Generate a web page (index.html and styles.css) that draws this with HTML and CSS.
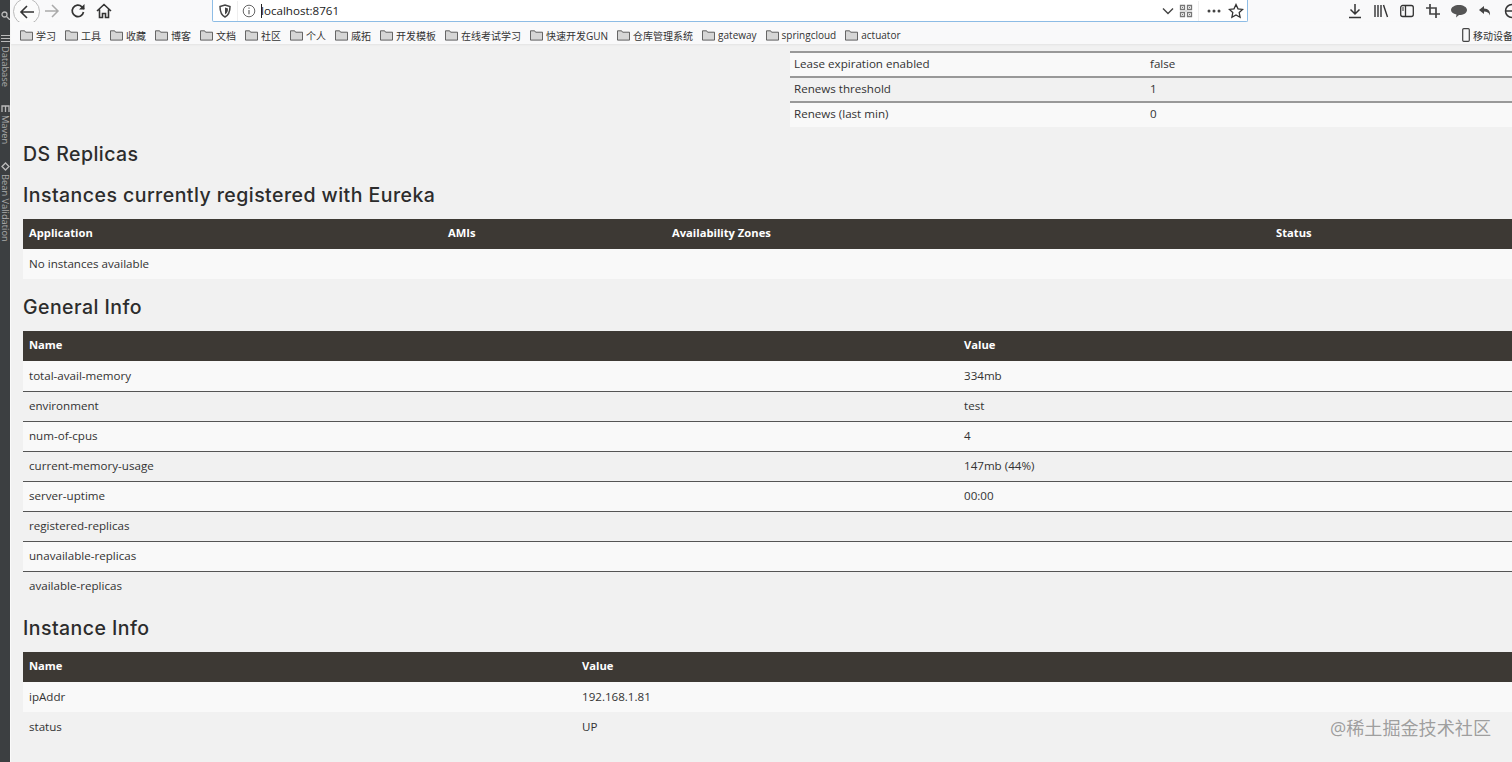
FILE: index.html
```html
<!DOCTYPE html>
<html lang="en">
<head>
    <meta charset="UTF-8">
    <title>Eureka</title>
    <link rel="stylesheet" href="styles.css">
</head>
<body>
    <div class="ide-strip">
        <svg class="strip-icon strip-search" width="9" height="9" viewBox="0 0 9 9"><circle cx="3.500" cy="3.500" r="2.500" fill="none" stroke="#bbb" stroke-width="1.300"/><path d="M5.500 5.500L9 9" stroke="#bbb" stroke-width="1.300"/></svg>
        <svg class="strip-icon strip-list" width="9" height="9" viewBox="0 0 9 9"><path d="M0 1.500h9M0 4.500h9M0 7.500h9" stroke="#bbb" stroke-width="1.200"/></svg>
        <span class="strip-label">Database</span>
        <svg class="strip-icon strip-m" width="9" height="7" viewBox="0 0 9 7"><path d="M1 7V1h7v6M4.500 1v6" fill="none" stroke="#bbb" stroke-width="1.300"/></svg>
        <span class="strip-label">Maven</span>
        <svg class="strip-icon strip-b" width="9" height="9" viewBox="0 0 9 9"><path d="M1 4.500L4.500 1 8 4.500 4.500 8z" fill="none" stroke="#bbb" stroke-width="1.300"/></svg>
        <span class="strip-label">Bean Validation</span>
    </div>

    <div class="window">
        <div class="toolbar">
            <div class="nav-buttons">
                <button class="back-button">
                    <svg width="18" height="18" viewBox="0 0 18 18"><path d="M16 9H3M9 3L3 9l6 6" fill="none" stroke="#333" stroke-width="1.600"/></svg>
                </button>
                <svg class="icon" width="18" height="18" viewBox="0 0 18 18"><path d="M2 9h13M9 3l6 6-6 6" fill="none" stroke="#aaa" stroke-width="1.500"/></svg>
                <svg class="icon" width="18" height="18" viewBox="0 0 18 18"><path d="M14.500 10a5.700 5.700 0 1 1-1.600-5.200L15 7" fill="none" stroke="#333" stroke-width="1.700"/><path d="M15.500 2v5.500H10z" fill="#333"/></svg>
                <svg class="icon" width="18" height="18" viewBox="0 0 18 18"><path d="M2 9l7-6.500L16 9M4.500 7.500V15.500h3v-4h3v4h3V7.500" fill="none" stroke="#333" stroke-width="1.600"/></svg>
            </div>
            <div class="urlbar">
                <svg class="url-icon" width="14" height="14" viewBox="0 0 14 14"><path d="M2 2.500L7 1l5 1.500c0 5-1 8.500-5 10.500C3 11 2 7.500 2 2.500z" fill="none" stroke="#444" stroke-width="1.500"/><path d="M7 3.500l3 1c0 3-.6 4.500-3 6z" fill="#444"/></svg>
                <span class="url-sep"></span>
                <svg class="url-icon" width="14" height="14" viewBox="0 0 14 14"><circle cx="7" cy="7" r="5.800" fill="none" stroke="#666"/><path d="M7 6v4.300M7 3.500v1.300" stroke="#666" stroke-width="1.200"/></svg>
                <span class="url-text"><span class="caret"></span>localhost:8761</span>
                <svg class="url-icon" width="14" height="14" viewBox="0 0 14 14"><path d="M2 4.500l5 5 5-5" fill="none" stroke="#444" stroke-width="1.400"/></svg>
                <svg class="url-icon" width="14" height="14" viewBox="0 0 14 14"><path d="M1.500 1.500h4v4h-4zM8.500 1.500h4v4h-4zM1.500 8.500h4v4h-4zM8.500 8.500h4v4h-4z" fill="none" stroke="#777" stroke-width="1.300"/><path d="M3 3h1v1H3zM10 3h1v1h-1zM3 10h1v1H3zM10 10h1v1h-1zM6.500 6.500h1v1h-1z" fill="#777"/></svg>
                <span class="url-sep"></span>
                <svg class="dots" width="16" height="14" viewBox="0 0 16 14"><circle cx="3" cy="7" r="1.500" fill="#444"/><circle cx="8" cy="7" r="1.500" fill="#444"/><circle cx="13" cy="7" r="1.500" fill="#444"/></svg>
                <svg class="url-icon" width="16" height="16" viewBox="0 0 16 16"><path d="M8 1.500l2 4.300 4.600.6-3.400 3.200.9 4.700L8 12l-4.100 2.300.9-4.700L1.400 6.400 6 5.800z" fill="none" stroke="#333" stroke-width="1.300"/></svg>
            </div>
            <div class="tools">
                <svg width="16" height="16" viewBox="0 0 16 16"><path d="M8 1v10M3.500 6.500L8 11l4.500-4.500M2 14.500h12" fill="none" stroke="#333" stroke-width="1.500"/></svg>
                <svg width="16" height="16" viewBox="0 0 16 16"><path d="M2 2v12M5 2v12M8 2v12M10.500 2l4 12" fill="none" stroke="#333" stroke-width="1.400"/></svg>
                <svg width="16" height="16" viewBox="0 0 16 16"><rect x="1.700" y="2.500" width="12.600" height="11" rx="2" fill="none" stroke="#333" stroke-width="1.300"/><path d="M6.500 2.500v11" stroke="#333" stroke-width="1.300"/><path d="M3 5h2M3 7h2" stroke="#333"/></svg>
                <svg width="16" height="16" viewBox="0 0 16 16"><path d="M5 1v10h10M1 5h10v10" fill="none" stroke="#444" stroke-width="1.700"/></svg>
                <svg width="16" height="16" viewBox="0 0 16 16"><path d="M8 2c4 0 8 2 8 5s-3.500 5-8 5l-3 2.500.5-3C2 10.500 0 9 0 7c0-3 4-5 8-5z" fill="#555"/></svg>
                <svg width="16" height="16" viewBox="0 0 16 16"><path d="M7 3L2 7l5 4V8.500c3 0 5 1 6 4 .5-4-1.500-7-6-7z" fill="#444"/></svg>
                <svg width="16" height="16" viewBox="0 0 16 16"><circle cx="9" cy="8" r="6.500" fill="none" stroke="#333" stroke-width="1.500"/><path d="M3 8h12" stroke="#333" stroke-width="1.500"/></svg>
            </div>
        </div>

        <div class="bookmarks">
            <a class="bookmark"><svg class="folder" viewBox="0 0 14 12"><path d="M.5 1.500h4.500l1 1.500h7.500v8.500H.5z" fill="#d6d6d6" stroke="#555"/></svg>学习</a>
            <a class="bookmark"><svg class="folder" viewBox="0 0 14 12"><path d="M.5 1.500h4.500l1 1.500h7.500v8.500H.5z" fill="#d6d6d6" stroke="#555"/></svg>工具</a>
            <a class="bookmark"><svg class="folder" viewBox="0 0 14 12"><path d="M.5 1.500h4.500l1 1.500h7.500v8.500H.5z" fill="#d6d6d6" stroke="#555"/></svg>收藏</a>
            <a class="bookmark"><svg class="folder" viewBox="0 0 14 12"><path d="M.5 1.500h4.500l1 1.500h7.500v8.500H.5z" fill="#d6d6d6" stroke="#555"/></svg>博客</a>
            <a class="bookmark"><svg class="folder" viewBox="0 0 14 12"><path d="M.5 1.500h4.500l1 1.500h7.500v8.500H.5z" fill="#d6d6d6" stroke="#555"/></svg>文档</a>
            <a class="bookmark"><svg class="folder" viewBox="0 0 14 12"><path d="M.5 1.500h4.500l1 1.500h7.500v8.500H.5z" fill="#d6d6d6" stroke="#555"/></svg>社区</a>
            <a class="bookmark"><svg class="folder" viewBox="0 0 14 12"><path d="M.5 1.500h4.500l1 1.500h7.500v8.500H.5z" fill="#d6d6d6" stroke="#555"/></svg>个人</a>
            <a class="bookmark"><svg class="folder" viewBox="0 0 14 12"><path d="M.5 1.500h4.500l1 1.500h7.500v8.500H.5z" fill="#d6d6d6" stroke="#555"/></svg>威拓</a>
            <a class="bookmark"><svg class="folder" viewBox="0 0 14 12"><path d="M.5 1.500h4.500l1 1.500h7.500v8.500H.5z" fill="#d6d6d6" stroke="#555"/></svg>开发模板</a>
            <a class="bookmark"><svg class="folder" viewBox="0 0 14 12"><path d="M.5 1.500h4.500l1 1.500h7.500v8.500H.5z" fill="#d6d6d6" stroke="#555"/></svg>在线考试学习</a>
            <a class="bookmark"><svg class="folder" viewBox="0 0 14 12"><path d="M.5 1.500h4.500l1 1.500h7.500v8.500H.5z" fill="#d6d6d6" stroke="#555"/></svg>快速开发GUN</a>
            <a class="bookmark"><svg class="folder" viewBox="0 0 14 12"><path d="M.5 1.500h4.500l1 1.500h7.500v8.500H.5z" fill="#d6d6d6" stroke="#555"/></svg>仓库管理系统</a>
            <a class="bookmark"><svg class="folder" viewBox="0 0 14 12"><path d="M.5 1.500h4.500l1 1.500h7.500v8.500H.5z" fill="#d6d6d6" stroke="#555"/></svg>gateway</a>
            <a class="bookmark"><svg class="folder" viewBox="0 0 14 12"><path d="M.5 1.500h4.500l1 1.500h7.500v8.500H.5z" fill="#d6d6d6" stroke="#555"/></svg>springcloud</a>
            <a class="bookmark"><svg class="folder" viewBox="0 0 14 12"><path d="M.5 1.500h4.500l1 1.500h7.500v8.500H.5z" fill="#d6d6d6" stroke="#555"/></svg>actuator</a>
            <a class="bookmark mobile"><svg class="phone" viewBox="0 0 8 14"><rect x=".7" y=".7" width="6.600" height="12.600" rx="1" fill="none" stroke="#444" stroke-width="1.200"/></svg>移动设备上</a>
        </div>

        <div class="main-content">
            <div class="top-section">
                <table class="lease-table">
                    <tr><td class="lease-name">Lease expiration enabled</td><td>false</td></tr>
                    <tr><td>Renews threshold</td><td>1</td></tr>
                    <tr><td>Renews (last min)</td><td>0</td></tr>
                </table>
            </div>

            <h2 class="replicas-title">DS Replicas</h2>

            <h2>Instances currently registered with Eureka</h2>
            <table class="data-table">
                <tr>
                    <th class="col-app">Application</th>
                    <th class="col-ami">AMIs</th>
                    <th class="col-zone">Availability Zones</th>
                    <th>Status</th>
                </tr>
                <tr><td colspan="4">No instances available</td></tr>
            </table>

            <h2>General Info</h2>
            <table class="data-table general-table">
                <tr><th class="col-general">Name</th><th>Value</th></tr>
                <tr><td>total-avail-memory</td><td>334mb</td></tr>
                <tr><td>environment</td><td>test</td></tr>
                <tr><td>num-of-cpus</td><td>4</td></tr>
                <tr><td>current-memory-usage</td><td>147mb (44%)</td></tr>
                <tr><td>server-uptime</td><td>00:00</td></tr>
                <tr><td>registered-replicas</td><td></td></tr>
                <tr><td>unavailable-replicas</td><td></td></tr>
                <tr><td>available-replicas</td><td></td></tr>
            </table>

            <h2 class="instance-title">Instance Info</h2>
            <table class="data-table">
                <tr><th class="col-instance">Name</th><th>Value</th></tr>
                <tr><td>ipAddr</td><td>192.168.1.81</td></tr>
                <tr><td>status</td><td>UP</td></tr>
            </table>
        </div>
    </div>

    <div class="watermark">@稀土掘金技术社区</div>
</body>
</html>
```

FILE: styles.css
```css
html, body {
    margin: 0;
    height: 100%;
    overflow: hidden;
}

body {
    display: flex;
    font-family: "Open Sans", "Noto Sans CJK SC", sans-serif;
    font-size: 11.6px;
    color: #333;
    background-color: #f1f1f1;
}

.ide-strip {
    flex: 0 0 10px;
    border-right: 1px solid #fafafa;
    background-color: #3c3f41;
    overflow: hidden;
    display: flex;
    flex-direction: column;
    align-items: center;
}

.strip-icon {
    flex-shrink: 0;
}

.strip-search {
    margin-top: 11px;
}

.strip-list {
    margin-top: 14px;
}

.strip-m {
    margin-top: 18px;
}

.strip-b {
    margin-top: 18px;
}

.strip-label {
    writing-mode: vertical-rl;
    margin-top: 3px;
    font-size: 9.300px;
    line-height: 10px;
    color: #aaa;
    white-space: nowrap;
}

.window {
    flex: 1;
    min-width: 0;
    display: flex;
    flex-direction: column;
}

.toolbar {
    height: 22px;
    display: flex;
    align-items: center;
    background-color: #f9f9fa;
}

.nav-buttons {
    width: 201px;
    display: flex;
    align-items: center;
}

.nav-buttons button {
    width: 27px;
    height: 27px;
    margin: 0 3px 0 2px;
    padding: 4px;
    border: 1px solid #bbb;
    border-radius: 50%;
    background: #fbfbfb;
    flex-shrink: 0;
}

.icon {
    margin-right: 8px;
    flex-shrink: 0;
}

.urlbar {
    width: 1036px;
    height: 22px;
    box-sizing: border-box;
    display: flex;
    align-items: center;
    gap: 4px;
    padding: 0 3px 0 5px;
    background: #fff;
    border: 1px solid #8ebde6;
    border-top: none;
    border-radius: 0 0 2px 2px;
}

.url-icon {
    flex-shrink: 0;
}

.url-sep {
    width: 1px;
    height: 20px;
    margin-left: 1px;
    background: #eee;
}

.url-text {
    flex: 1;
    margin-left: 1px;
    font-size: 11.600px;
    color: #222;
    display: flex;
    align-items: center;
}

.caret {
    width: 1px;
    height: 14px;
    background: #222;
    margin-right: -1px;
}

.dots {
    margin: 0 2px 0 3px;
    flex-shrink: 0;
}

.tools {
    flex: 1;
    display: flex;
    align-items: center;
    gap: 10px;
    padding-left: 99px;
    overflow: hidden;
}

.tools svg {
    flex-shrink: 0;
}

.bookmarks {
    height: 22px;
    box-sizing: border-box;
    padding: 4px 0 0 9px;
    display: flex;
    align-items: center;
    gap: 9px;
    font-size: 10px;
    color: #333;
    background-color: #f9f9fa;
    box-shadow: 0 1px 2px rgba(0, 0, 0, 0.06);
    white-space: nowrap;
    overflow: hidden;
    position: relative;
}

.bookmark {
    display: flex;
    align-items: center;
    gap: 3px;
}

.folder {
    width: 13px;
    height: 12px;
}

.phone {
    width: 8px;
    height: 14px;
}

.mobile {
    margin-left: auto;
    margin-right: -11px;
}

.main-content {
    flex: 1;
    padding: 7px 0 0 12px;
}

.top-section {
    display: flex;
    justify-content: flex-end;
}

.lease-table {
    width: 722px;
    border-collapse: collapse;
    background-color: #f9f9f9;
}

.lease-table td {
    height: 25px;
    box-sizing: border-box;
    padding: 0 4px 3px;
    border-top: 2px solid #999;
}

.lease-table tr:nth-child(2) td {
    background-color: #f1f1f1;
}

.lease-name {
    width: 356px;
}

h2 {
    margin: 0;
    font-family: Inter, sans-serif;
    font-size: 19.500px;
    font-weight: 500;
    letter-spacing: 0.45px;
    line-height: 26px;
    color: #2c2c2c;
    padding: 15px 0 11px;
}

.replicas-title {
    padding: 14px 0 0;
}

.instance-title {
    padding-top: 14px;
}

.data-table {
    width: 100%;
    border-collapse: collapse;
}

.data-table th {
    height: 30px;
    box-sizing: border-box;
    padding: 0 6px 4px;
    text-align: left;
    font-size: 11.200px;
    font-weight: 700;
    color: #fff;
    background-color: #3d3934;
}

.data-table td {
    height: 30px;
    box-sizing: border-box;
    padding: 0 6px 1px;
    background-color: #f9f9f9;
}

.data-table tr:nth-child(odd) td {
    background-color: #f1f1f1;
}

.general-table tr:nth-child(n+3) td {
    border-top: 1px solid #555;
}

.col-app {
    width: 419px;
}

.col-ami {
    width: 224px;
}

.col-zone {
    width: 604px;
}

.col-general {
    width: 935px;
}

.col-instance {
    width: 553px;
}

.watermark {
    position: absolute;
    right: 21px;
    bottom: 22px;
    font-size: 18.100px;
    color: rgba(110, 110, 110, 0.65);
}
```
